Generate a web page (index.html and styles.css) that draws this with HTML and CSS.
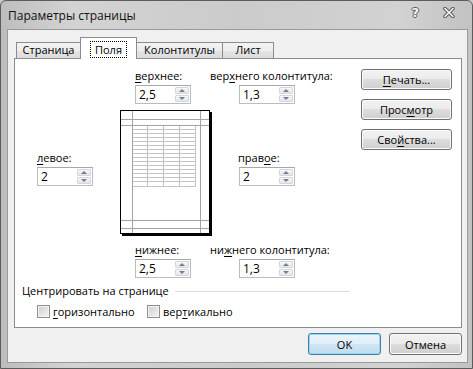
FILE: index.html
```html
<!DOCTYPE html>
<html lang="ru">
<head>
    <meta charset="UTF-8">
    <title>Параметры страницы</title>
    <link rel="stylesheet" href="styles.css">
</head>
<body>
    <div class="window">
        <div class="titlebar">
            <span class="title">Параметры страницы</span>
            <span class="caption-buttons">
                <span class="help">?</span>
                <svg class="close" width="12" height="11" viewBox="0 0 12 11">
                    <path d="M2 1.5 L10 9.5 M10 1.5 L2 9.5" stroke="#5a5a5a" stroke-width="3.6" stroke-linecap="round"/>
                    <path d="M2 1.5 L10 9.5 M10 1.5 L2 9.5" stroke="#fafafa" stroke-width="1.6" stroke-linecap="round"/>
                </svg>
            </span>
        </div>

        <div class="client">
            <div class="tabs">
                <div class="tab tab-page">Страница</div>
                <div class="tab tab-margins active"><span class="focus">Поля</span></div>
                <div class="tab tab-header">Колонтитулы</div>
                <div class="tab tab-sheet">Лист</div>
            </div>

            <div class="panel">
                <div class="panel-top">
                    <div class="margins">
                        <div class="field f-top">
                            <span class="field-label"><u>в</u>ерхнее:</span>
                            <div class="spin"><span class="spin-value">2,5</span><span class="spin-arrows"><span class="up"></span><span class="down"></span></span></div>
                        </div>
                        <div class="field f-header">
                            <span class="field-label">вер<u>х</u>него колонтитула:</span>
                            <div class="spin"><span class="spin-value">1,3</span><span class="spin-arrows"><span class="up"></span><span class="down"></span></span></div>
                        </div>
                        <div class="field f-left">
                            <span class="field-label"><u>л</u>евое:</span>
                            <div class="spin"><span class="spin-value">2</span><span class="spin-arrows"><span class="up"></span><span class="down"></span></span></div>
                        </div>
                        <div class="page-preview">
                            <svg width="92" height="126" viewBox="0 0 92 126">
                                <rect x="0.5" y="0.5" width="89" height="123" fill="#fff" stroke="#000"/>
                                <rect x="90" y="2" width="2" height="124" fill="#000"/>
                                <rect x="2" y="124" width="90" height="2" fill="#000"/>
                                <g stroke="#c4c4c4" stroke-width="1">
                                    <path d="M27.5 15.5 V76.5 M43.5 15.5 V76.5 M59.5 15.5 V76.5 M75.5 15.5 V76.5"/>
                                    <path d="M12.5 19.5 H75.5 M12.5 23.5 H75.5 M12.5 27.5 H75.5 M12.5 31.5 H75.5 M12.5 35.5 H75.5 M12.5 39.5 H75.5 M12.5 43.5 H75.5 M12.5 47.5 H75.5 M12.5 51.5 H75.5 M12.5 55.5 H75.5 M12.5 59.5 H75.5 M12.5 63.5 H75.5 M12.5 67.5 H75.5 M12.5 71.5 H75.5 M12.5 76.5 H75.5"/>
                                </g>
                                <g stroke="#a3a3a3" stroke-width="1">
                                    <path d="M12.5 1 V123 M80.5 1 V123"/>
                                    <path d="M1 9.5 H89 M1 15.5 H89 M1 110.5 H89 M1 118.5 H89"/>
                                </g>
                            </svg>
                        </div>
                        <div class="field f-right">
                            <span class="field-label">прав<u>о</u>е:</span>
                            <div class="spin"><span class="spin-value">2</span><span class="spin-arrows"><span class="up"></span><span class="down"></span></span></div>
                        </div>
                        <div class="field f-bottom">
                            <span class="field-label"><u>н</u>ижнее:</span>
                            <div class="spin"><span class="spin-value">2,5</span><span class="spin-arrows"><span class="up"></span><span class="down"></span></span></div>
                        </div>
                        <div class="field f-footer">
                            <span class="field-label">ни<u>ж</u>него колонтитула:</span>
                            <div class="spin"><span class="spin-value">1,3</span><span class="spin-arrows"><span class="up"></span><span class="down"></span></span></div>
                        </div>
                    </div>

                    <div class="side-buttons">
                        <button class="btn"><u>П</u>ечать...</button>
                        <button class="btn">Прос<u>м</u>отр</button>
                        <button class="btn">Сво<u>й</u>ства...</button>
                    </div>
                </div>

                <div class="center-group">
                    <div class="group-title">
                        <span>Центрировать на странице</span>
                        <span class="rule"></span>
                    </div>
                    <div class="checks">
                        <label class="check check-first"><span class="box"></span><span><u>г</u>оризонтально</span></label>
                        <label class="check"><span class="box"></span><span>вер<u>т</u>икально</span></label>
                    </div>
                </div>
            </div>

            <div class="dialog-buttons">
                <button class="btn btn-default">OK</button>
                <button class="btn">Отмена</button>
            </div>
        </div>
    </div>
</body>
</html>
```

FILE: styles.css
```css
* {
    box-sizing: border-box;
}

body {
    margin: 0;
    width: 473px;
    height: 369px;
    overflow: hidden;
    font-family: "Open Sans", "Liberation Sans", sans-serif;
    font-size: 11px;
    color: #000;
    background: #c9c9c9;
}

u {
    text-decoration: underline;
    text-underline-offset: 2px;
}

/* window frame */

.window {
    width: 473px;
    height: 369px;
    border: 1px solid #5c5c5c;
    border-radius: 6px 6px 0 0;
    background: linear-gradient(to right, #bdbdbd 0%, #d3d3d3 15%, #cbcbcb 50%, #d2d2d2 85%, #c2c2c2 100%);
    padding: 0 4px 6px 6px;
}

.titlebar {
    height: 28px;
    display: flex;
    align-items: center;
    padding-left: 1px;
}

.title {
    font-size: 12px;
    color: #111;
    padding-top: 1px;
}

.caption-buttons {
    margin-left: auto;
    display: flex;
    align-items: center;
    gap: 24px;
    margin-right: 13px;
    margin-top: -6px;
}

.help {
    font-family: "DejaVu Sans", sans-serif;
    font-weight: bold;
    font-size: 13px;
    color: #f6f6f6;
    text-shadow: 1px 0 0 #5a5a5a, -1px 0 0 #5a5a5a, 0 1px 0 #5a5a5a, 0 -1px 0 #5a5a5a;
}

/* client area */

.client {
    height: 334px;
    background: #f0f0f0;
    border: 1px solid #9a9a9a;
    padding: 7px 5px 5px 6px;
}

.tabs {
    display: flex;
    align-items: flex-end;
    height: 21px;
    padding-left: 2px;
}

.tab {
    height: 16px;
    line-height: 14px;
    text-align: center;
    border: 1px solid #898c95;
    border-bottom: none;
    background: linear-gradient(#f3f3f3, #ededed 50%, #e4e4e4 51%, #dcdcdc);
    margin-left: -1px;
}

.tab-page {
    width: 65px;
    margin-left: 0;
}

.tab-margins {
    width: 57px;
}

.tab-header {
    width: 87px;
}

.tab-sheet {
    width: 52px;
}

.tab.active {
    height: 22px;
    background: #fff;
    margin-bottom: -1px;
    position: relative;
    z-index: 1;
    padding-top: 4px;
}

.focus {
    display: inline-block;
    outline: 1px dotted #000;
    padding: 0 4px;
    line-height: 15px;
}

.panel {
    height: 270px;
    background: #fff;
    border: 1px solid #898c95;
}

.panel-top {
    display: flex;
}

/* margins grid */

.margins {
    display: grid;
    grid-template-columns: 83px 91px 125px;
    grid-template-rows: auto 126px auto;
    row-gap: 6px;
    padding: 9px 0 0 22px;
}

.field {
    display: flex;
    flex-direction: column;
    align-items: flex-start;
    gap: 2px;
}

.field-label {
    line-height: 15px;
    white-space: nowrap;
}

.f-top {
    grid-column: 2;
    grid-row: 1;
    margin-left: 15px;
}

.f-header {
    grid-column: 3;
    grid-row: 1;
    margin-left: -1px;
}

.f-header .spin,
.f-footer .spin {
    margin-left: 29px;
}

.f-left {
    grid-column: 1;
    grid-row: 2;
    margin-top: 40px;
}

.page-preview {
    grid-column: 2;
    grid-row: 2;
    line-height: 0;
}

.f-right {
    grid-column: 3;
    grid-row: 2;
    margin-top: 40px;
    margin-left: 27px;
}

.f-right .spin {
    margin-left: 1px;
}

.f-bottom {
    grid-column: 2;
    grid-row: 3;
    margin-left: 15px;
}

.f-footer {
    grid-column: 3;
    grid-row: 3;
    margin-left: -1px;
}

/* spin box */

.spin {
    width: 56px;
    height: 19px;
    display: flex;
    border: 1px solid #b9bcc2;
    border-top-color: #a5a8ae;
    background: #fff;
}

.spin-value {
    flex: 1;
    font-size: 12px;
    line-height: 17px;
    padding-left: 3px;
}

.spin-arrows {
    width: 15px;
    display: flex;
    flex-direction: column;
    padding: 1px 1px 1px 0;
    gap: 1px;
}

.spin-arrows span {
    flex: 1;
    border: 1px solid #d3d6db;
    border-radius: 1px;
    background: linear-gradient(#f7f7f7, #e6e6e6);
    display: flex;
    align-items: center;
    justify-content: center;
}

.spin-arrows .up::after,
.spin-arrows .down::after {
    content: "";
    border-left: 3px solid transparent;
    border-right: 3px solid transparent;
}

.spin-arrows .up::after {
    border-bottom: 3px solid #6d7e9b;
}

.spin-arrows .down::after {
    border-top: 3px solid #6d7e9b;
}

/* buttons */

.btn {
    font-family: inherit;
    font-size: 11px;
    color: #000;
    height: 21px;
    padding: 0;
    border: 1px solid #707070;
    border-radius: 3px;
    background: linear-gradient(#f2f2f2 0%, #ebebeb 49%, #dddddd 50%, #cfcfcf 100%);
    box-shadow: inset 0 0 0 1px #fbfbfb;
    line-height: 17px;
}

.side-buttons {
    display: flex;
    flex-direction: column;
    gap: 9px;
    margin-left: auto;
    margin-right: 9px;
    padding-top: 10px;
}

.side-buttons .btn {
    width: 91px;
}

.dialog-buttons {
    display: flex;
    justify-content: flex-end;
    gap: 8px;
    margin-top: 5px;
    padding-right: 0;
}

.dialog-buttons .btn {
    width: 73px;
    height: 22px;
}

.btn-default {
    border-color: #3c7fb1;
    background: linear-gradient(#eaf4fa 0%, #e1eff8 49%, #cfe6f4 50%, #c1dcee 100%);
    box-shadow: inset 0 0 0 1px #9ed3f2;
}

/* centre group */

.center-group {
    padding: 5px 0 0 7px;
}

.group-title {
    display: flex;
    align-items: center;
    line-height: 15px;
}

.rule {
    flex: 1;
    height: 1px;
    background: #d5dfe5;
    margin: 1px 111px 0 6px;
}

.checks {
    display: flex;
    margin-top: 6px;
    padding-left: 15px;
    line-height: 15px;
}

.check {
    display: flex;
    align-items: center;
    gap: 3px;
}

.check-first {
    width: 110px;
}

.box {
    width: 13px;
    height: 13px;
    border: 1px solid #8e8f8f;
    background: linear-gradient(135deg, #cbcfd5, #f4f4f4);
    box-shadow: inset 0 0 0 1px #f4f4f4;
}
```
